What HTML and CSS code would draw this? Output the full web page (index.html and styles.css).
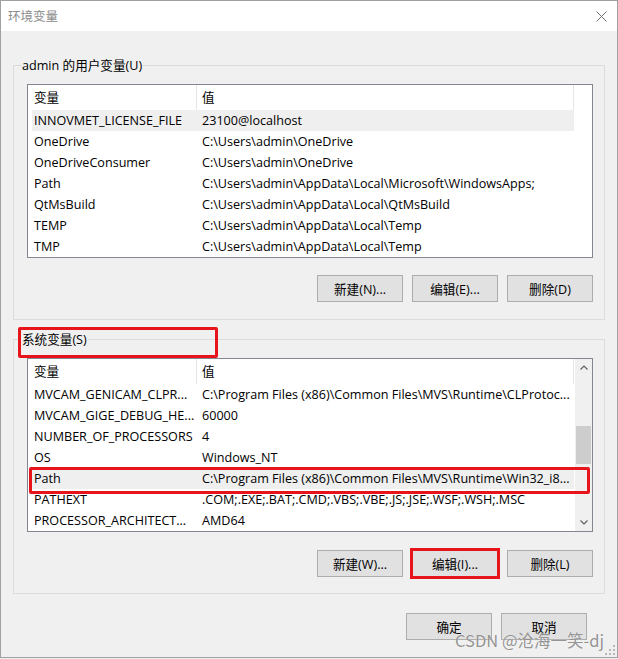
FILE: index.html
```html
<!DOCTYPE html>
<html lang="zh-CN">
<head>
<meta charset="utf-8">
<title>环境变量</title>
<link rel="stylesheet" href="styles.css">
</head>
<body>
<div class="window">
  <div class="titlebar">
    <span class="title">环境变量</span>
    <svg class="close" width="11" height="11" viewBox="0 0 11 11"><path d="M0.5 0.5 L10.5 10.5 M10.5 0.5 L0.5 10.5" stroke="#707070" stroke-width="1" fill="none"/></svg>
  </div>
  <div class="content">
    <div class="group group-user">
      <div class="legend">admin 的用户变量(U)</div>
      <div class="list">
        <div class="rows">
          <div class="head"><div class="c1">变量</div><div class="c2">值</div></div>
          <div class="row sel"><div class="c1">INNOVMET_LICENSE_FILE</div><div class="c2">23100@localhost</div></div>
          <div class="row"><div class="c1">OneDrive</div><div class="c2">C:\Users\admin\OneDrive</div></div>
          <div class="row"><div class="c1">OneDriveConsumer</div><div class="c2">C:\Users\admin\OneDrive</div></div>
          <div class="row"><div class="c1">Path</div><div class="c2">C:\Users\admin\AppData\Local\Microsoft\WindowsApps;</div></div>
          <div class="row"><div class="c1">QtMsBuild</div><div class="c2">C:\Users\admin\AppData\Local\QtMsBuild</div></div>
          <div class="row"><div class="c1">TEMP</div><div class="c2">C:\Users\admin\AppData\Local\Temp</div></div>
          <div class="row"><div class="c1">TMP</div><div class="c2">C:\Users\admin\AppData\Local\Temp</div></div>
        </div>
      </div>
      <div class="buttons">
        <button class="btn">新建(N)...</button>
        <button class="btn">编辑(E)...</button>
        <button class="btn">删除(D)</button>
      </div>
    </div>
    <div class="group group-sys">
      <div class="legend">系统变量(S)</div>
      <div class="list">
        <div class="rows">
          <div class="head"><div class="c1">变量</div><div class="c2">值</div></div>
          <div class="row"><div class="c1">MVCAM_GENICAM_CLPR...</div><div class="c2">C:\Program Files (x86)\Common Files\MVS\Runtime\CLProtoc...</div></div>
          <div class="row"><div class="c1">MVCAM_GIGE_DEBUG_HE...</div><div class="c2">60000</div></div>
          <div class="row"><div class="c1">NUMBER_OF_PROCESSORS</div><div class="c2">4</div></div>
          <div class="row"><div class="c1">OS</div><div class="c2">Windows_NT</div></div>
          <div class="row sel"><div class="c1">Path</div><div class="c2">C:\Program Files (x86)\Common Files\MVS\Runtime\Win32_i8...</div></div>
          <div class="row"><div class="c1">PATHEXT</div><div class="c2">.COM;.EXE;.BAT;.CMD;.VBS;.VBE;.JS;.JSE;.WSF;.WSH;.MSC</div></div>
          <div class="row"><div class="c1">PROCESSOR_ARCHITECT...</div><div class="c2">AMD64</div></div>
        </div>
        <div class="scrollbar">
          <div class="sb-btn"><svg width="8" height="5" viewBox="0 0 8 5"><path d="M0.5 4.5 L4 1 L7.5 4.5" stroke="#606060" stroke-width="1.2" fill="none"/></svg></div>
          <div class="track"><div class="thumb"></div></div>
          <div class="sb-btn"><svg width="8" height="5" viewBox="0 0 8 5"><path d="M0.5 0.5 L4 4 L7.5 0.5" stroke="#606060" stroke-width="1.2" fill="none"/></svg></div>
        </div>
      </div>
      <div class="buttons">
        <button class="btn">新建(W)...</button>
        <button class="btn focus">编辑(I)...</button>
        <button class="btn">删除(L)</button>
      </div>
    </div>
    <div class="footer">
      <button class="btn">确定</button>
      <button class="btn">取消</button>
    </div>
  </div>
  <div class="mark mark-sys"></div>
  <div class="mark mark-path"></div>
  <div class="watermark">CSDN @沧海一笑-dj</div>
  <svg class="grip" width="10" height="10" viewBox="0 0 10 10">
    <rect x="8" y="0" width="2" height="2" fill="#b8b8b8"/>
    <rect x="4" y="4" width="2" height="2" fill="#b8b8b8"/>
    <rect x="8" y="4" width="2" height="2" fill="#b8b8b8"/>
    <rect x="0" y="8" width="2" height="2" fill="#b8b8b8"/>
    <rect x="4" y="8" width="2" height="2" fill="#b8b8b8"/>
    <rect x="8" y="8" width="2" height="2" fill="#b8b8b8"/>
  </svg>
</div>
</body>
</html>
```

FILE: styles.css
```css
* { box-sizing: border-box; }
html, body { margin: 0; padding: 0; }
body {
  width: 618px;
  height: 659px;
  overflow: hidden;
  background: #f0f0f0;
  font-family: "Open Sans", "Noto Sans CJK SC", sans-serif;
  font-size: 12.6px;
  color: #000;
}
.window {
  position: relative;
  width: 618px;
  height: 658px;
  border: 1px solid #a0a0a0;
  background: #f0f0f0;
  display: flex;
  flex-direction: column;
}
.titlebar {
  flex: none;
  height: 30px;
  background: #fff;
  display: flex;
  align-items: center;
  justify-content: space-between;
  padding: 0 10px 0 7px;
}
.title {
  color: #8a8a8a;
  font-size: 12.5px;
  line-height: 16px;
  font-family: "Noto Sans CJK SC", sans-serif;
}
.close { display: block; }
.content {
  flex: 1;
  display: flex;
  flex-direction: column;
  padding: 34px 12px 0 12px;
}
.group {
  border: 1px solid #dcdcdc;
  padding: 0 11px 17px 13px;
}
.group-sys {
  margin-top: 19px;
  padding-bottom: 16px;
}
.legend {
  width: max-content;
  height: 16px;
  line-height: 16px;
  margin: -8px 0 0 -6px;
  padding: 0 1px;
  background: #f0f0f0;
}
.list {
  margin-top: 10px;
  height: 174px;
  border: 1px solid #828790;
  background: #fff;
  padding-left: 4px;
  display: flex;
}
.rows { width: 542px; flex: none; }
.head {
  display: flex;
  height: 25px;
  line-height: 25px;
}
.head .c1 {
  width: 165px;
  padding-left: 2px;
  border-right: 1px solid #e5e5e5;
}
.head .c2 {
  width: 377px;
  padding-left: 5px;
  border-right: 1px solid #e5e5e5;
}
.row {
  display: flex;
  height: 21px;
  line-height: 21px;
  white-space: nowrap;
}
.row .c1 {
  width: 165px;
  flex: none;
  padding-left: 2px;
  overflow: hidden;
}
.row .c2 {
  flex: 1;
  padding-left: 5px;
  overflow: hidden;
}
.row.sel { background: #efefef; }
.scrollbar {
  width: 17px;
  margin-left: 1px;
  display: flex;
  flex-direction: column;
  background: #f0f0f0;
}
.sb-btn {
  height: 17px;
  display: flex;
  align-items: center;
  justify-content: center;
}
.sb-btn svg { display: block; }
.track {
  flex: 1;
  padding: 50px 1px 0 1px;
}
.thumb {
  height: 38px;
  background: #cdcdcd;
}
.buttons {
  display: flex;
  justify-content: flex-end;
  gap: 9px;
  margin-top: 17px;
}
.group-sys .buttons { margin-top: 18px; }
.btn {
  width: 86px;
  height: 27px;
  padding: 0;
  border: 1px solid #adadad;
  background: #e1e1e1;
  font: inherit;
  color: #000;
  display: flex;
  align-items: center;
  justify-content: center;
}
.btn.focus {
  outline: 3px solid #e8141c;
  outline-offset: -1px;
}
.footer {
  display: flex;
  justify-content: flex-end;
  gap: 9px;
  margin-top: 19px;
  padding-right: 18px;
}
.mark {
  position: absolute;
  border: 3px solid #e8141c;
  border-radius: 2px;
  pointer-events: none;
}
.mark-sys {
  left: 17px;
  top: 326px;
  width: 200px;
  height: 31px;
}
.mark-path {
  left: 28px;
  top: 466px;
  width: 561px;
  height: 27px;
}
.watermark {
  position: absolute;
  left: 454px;
  top: 628px;
  font-family: "Noto Sans CJK SC", sans-serif;
  font-size: 16.5px;
  line-height: 22px;
  color: rgba(120, 120, 120, 0.8);
  text-shadow: 0 0 1px rgba(255, 255, 255, 0.9);
  white-space: nowrap;
}
.grip {
  position: absolute;
  right: 2px;
  bottom: 2px;
}
```
